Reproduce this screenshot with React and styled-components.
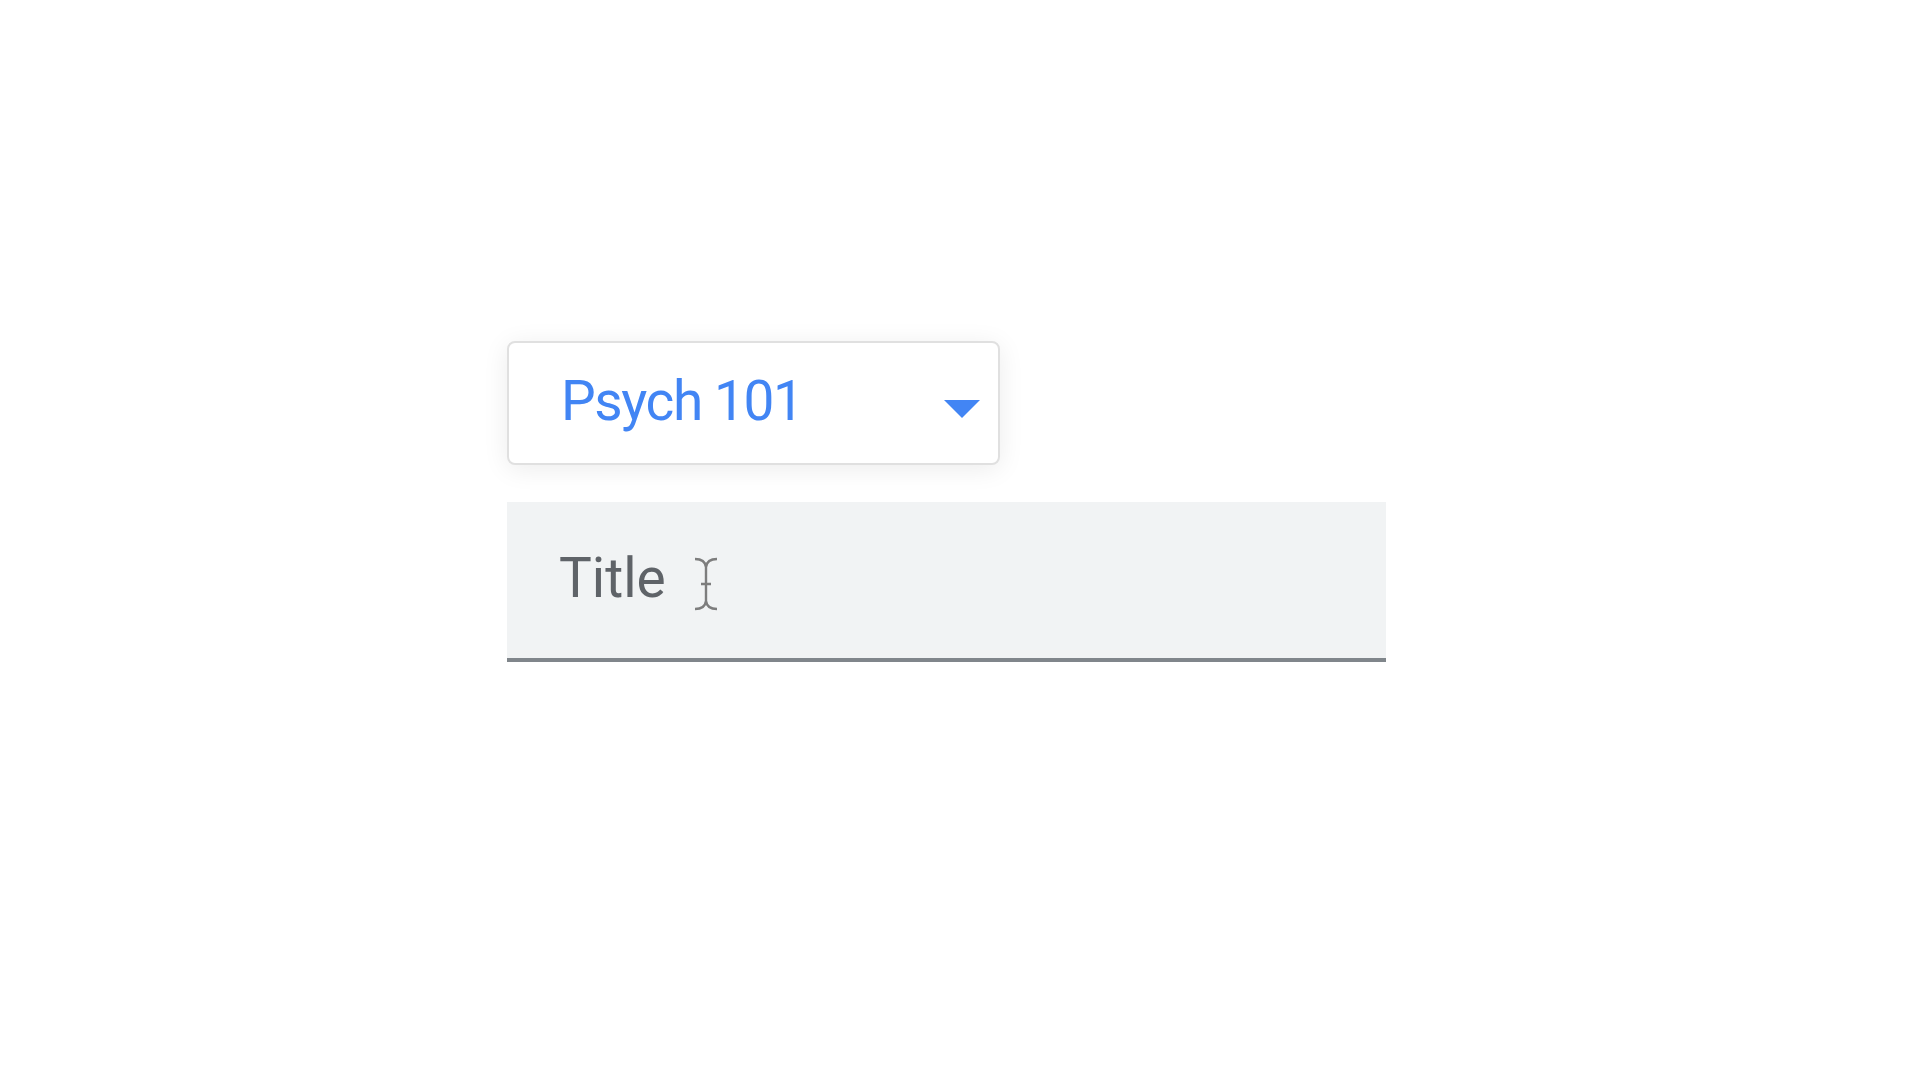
import React from 'react'
import styled, { createGlobalStyle } from 'styled-components'

const GlobalStyle = createGlobalStyle`
  body {
    margin: 0;
    background: #ffffff;
    font-family: Roboto, "Noto Sans", sans-serif;
  }
`

const Page = styled.div`
  width: 1920px;
  height: 1080px;
  padding: 341px 0 0 507px;
  box-sizing: border-box;
  display: flex;
  flex-direction: column;
  align-items: flex-start;
  gap: 37px;
`

const Select = styled.div`
  width: 493px;
  height: 124px;
  box-sizing: border-box;
  border: 2px solid #e0e0e0;
  border-radius: 8px;
  background: #fff;
  box-shadow: 0 4px 26px rgba(0, 0, 0, 0.08);
  display: flex;
  align-items: center;
  justify-content: space-between;
  padding: 0 18px 0 52px;
`

const SelectLabel = styled.span`
  font-size: 55px;
  color: #4285f4;
  letter-spacing: -1.4px;
  position: relative;
  top: -2px;
`

const Caret = styled.span`
  width: 0;
  height: 0;
  border-left: 18px solid transparent;
  border-right: 18px solid transparent;
  border-top: 18px solid #4285f4;
  margin-top: 12px;
`

const Field = styled.div`
  width: 879px;
  height: 160px;
  box-sizing: border-box;
  background: #f1f3f4;
  border-bottom: 4px solid #80868b;
  display: flex;
  align-items: center;
  padding: 0 0 4px 52px;
  gap: 27px;
`

const Placeholder = styled.span`
  font-size: 55px;
  color: #5f6368;
`

const Cursor = () => (
  <svg width="26" height="54" viewBox="0 0 26 54" style={{ marginTop: 12 }}>
    <path
      d="M2 2 Q12 2 13 10 Q14 2 24 2 M13 10 L13 44 M8 27 L18 27 M2 52 Q12 52 13 44 Q14 52 24 52"
      fill="none"
      stroke="#7d7d7d"
      strokeWidth="2.4"
    />
  </svg>
)

const App = () => {
  return (
    <>
      <GlobalStyle />
      <Page>
        <Select>
          <SelectLabel>Psych 101</SelectLabel>
          <Caret />
        </Select>
        <Field>
          <Placeholder>Title</Placeholder>
          <Cursor />
        </Field>
      </Page>
    </>
  )
}

export default App
